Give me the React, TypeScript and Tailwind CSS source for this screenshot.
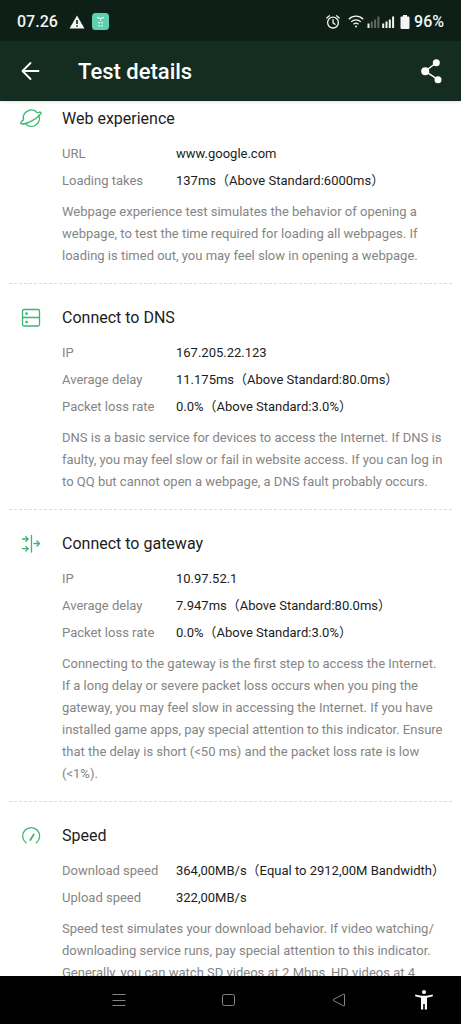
import type { ReactNode } from "react";

type Section = {
  title: string;
  icon: ReactNode;
  rows: [string, string][];
  text: string;
};

const stroke = {
  fill: "none",
  stroke: "currentColor",
  strokeWidth: 1.3,
  strokeLinecap: "round",
  strokeLinejoin: "round",
} as const;

function PlanetIcon() {
  return (
    <svg viewBox="0 0 24 24" className="size-6" {...stroke}>
      <path d="M4.5 12.6A8 8 0 0 1 18.4 5.8" />
      <path d="M19.8 8.2A8 8 0 0 1 7.2 17.4" />
      <path d="M4.5 12.8C2.2 14.6 1.2 15.9 1.8 16.5c1.2 1.2 6.800-.4 11.500-2.900C18.600 10.600 22.600 6.800 22 5.500c-.3-.600-1.300-.500-2.600-.1" />
    </svg>
  );
}

function ServerIcon() {
  return (
    <svg viewBox="0 0 24 24" className="size-6" {...stroke}>
      <rect x="3.500" y="3.500" width="17" height="16.500" rx="1.500" />
      <path d="M3.500 11.500h17" />
      <circle cx="7.600" cy="7.600" r=".7" fill="currentColor" />
      <circle cx="7.600" cy="16" r=".7" fill="currentColor" />
    </svg>
  );
}

function GatewayIcon() {
  return (
    <svg viewBox="0 0 24 24" className="size-6" {...stroke}>
      <path d="M12.500 3.500v16.500" />
      <path d="M3.500 7h5.700M6.800 4.700 9.200 7 6.800 9.300M3.500 16.700h5.700M6.800 14.400l2.400 2.300-2.400 2.300M15 11.500h5.400M18 9l2.500 2.500L18 14" />
    </svg>
  );
}

function GaugeIcon() {
  return (
    <svg viewBox="0 0 24 24" className="size-6" {...stroke}>
      <path d="M7 18.800A8.500 8.500 0 1 1 17.300 18.800" />
      <path d="M11.300 16 14.700 10.500" strokeWidth="1.800" />
    </svg>
  );
}

const sections: Section[] = [
  {
    title: "Web experience",
    icon: <PlanetIcon />,
    rows: [
      ["URL", "www.google.com"],
      ["Loading takes", "137ms（Above Standard:6000ms）"],
    ],
    text: "Webpage experience test simulates the behavior of opening a webpage, to test the time required for loading all webpages. If loading is timed out, you may feel slow in opening a webpage.",
  },
  {
    title: "Connect to DNS",
    icon: <ServerIcon />,
    rows: [
      ["IP", "167.205.22.123"],
      ["Average delay", "11.175ms（Above Standard:80.0ms）"],
      ["Packet loss rate", "0.0%（Above Standard:3.0%）"],
    ],
    text: "DNS is a basic service for devices to access the Internet. If DNS is faulty, you may feel slow or fail in website access. If you can log in to QQ but cannot open a webpage, a DNS fault probably occurs.",
  },
  {
    title: "Connect to gateway",
    icon: <GatewayIcon />,
    rows: [
      ["IP", "10.97.52.1"],
      ["Average delay", "7.947ms（Above Standard:80.0ms）"],
      ["Packet loss rate", "0.0%（Above Standard:3.0%）"],
    ],
    text: "Connecting to the gateway is the first step to access the Internet. If a long delay or severe packet loss occurs when you ping the gateway, you may feel slow in accessing the Internet. If you have installed game apps, pay special attention to this indicator. Ensure that the delay is short (<50 ms) and the packet loss rate is low (<1%).",
  },
  {
    title: "Speed",
    icon: <GaugeIcon />,
    rows: [
      ["Download speed", "364,00MB/s（Equal to 2912,00M Bandwidth）"],
      ["Upload speed", "322,00MB/s"],
    ],
    text: "Speed test simulates your download behavior. If video watching/ downloading service runs, pay special attention to this indicator. Generally, you can watch SD videos at 2 Mbps, HD videos at 4",
  },
];

function StatusBar() {
  return (
    <div className="flex h-[41px] shrink-0 items-center justify-between bg-[#0d1f16] px-[17px] pt-0.5 text-[#f2f5f3]">
      <div className="flex items-center">
        <span className="text-base font-medium">07.26</span>
        <svg viewBox="0 0 16 14" className="ml-[11px] h-3.5 w-4">
          <path d="M8 .5 15.500 13.500H.5Z" fill="currentColor" />
          <path d="M7.200 5h1.600v4H7.200zM7.200 10.200h1.600v1.600H7.200z" fill="#0d1f16" />
        </svg>
        <svg viewBox="0 0 17 17" className="ml-[7px] size-[17px]">
          <rect width="17" height="17" rx="3.500" fill="#5fcfae" />
          <path d="M5.200 4.200c1.500 1.700 5 1.700 6.600 0" fill="none" stroke="#fff" strokeWidth="1.200" />
          <path
            d="M8 6.500h1v1.500H8zM6.200 9h1.600v1.500H6.200zM9.200 9h1.600v1.500H9.200zM6.200 12h1.600v1.500H6.200zM9.200 12h1.600v1.500H9.200z"
            fill="#d9f5ec"
          />
        </svg>
      </div>
      <div className="flex items-center">
        <svg viewBox="0 0 14 14" className="size-3.5" fill="none" stroke="currentColor" strokeWidth="1.300" strokeLinecap="round">
          <circle cx="7" cy="7.600" r="5.400" />
          <path d="M7 4.700v3.100l2 1.500M.8 3 3.400.8M13.200 3 10.600.8" />
        </svg>
        <svg viewBox="0 0 16 13" className="ml-2 h-[13px] w-4" fill="none" stroke="currentColor" strokeWidth="1.300">
          <path d="M.8 4.200c4-4 10.400-4 14.400 0M3.200 6.900c2.700-2.700 6.900-2.700 9.600 0M5.500 9.300c1.500-1.400 3.500-1.400 5 0" />
          <circle cx="8" cy="11.600" r="1" fill="currentColor" stroke="none" />
        </svg>
        <svg viewBox="0 0 28 12" className="ml-[3px] h-3 w-7" fill="currentColor">
          <path d="M.5 7.500h2V12h-2z" />
          <path d="M3.800 5.500h2V12h-2zM7.100 3.500h2V12h-2zM10.400.5h2V12h-2z" opacity=".35" />
          <path d="M15.200 7.500h2V12h-2zM18.500 5.500h2V12h-2zM21.800 3.500h2V12h-2zM25.100.5h2V12h-2z" />
        </svg>
        <svg viewBox="0 0 10 14" className="ml-[5px] h-3.5 w-2.5" fill="currentColor">
          <path d="M3 0h4v1.500h1.500q1 0 1 1V13q0 1-1 1h-7q-1 0-1-1V2.500q0-1 1-1H3z" />
        </svg>
        <span className="ml-1 text-base font-medium">96%</span>
      </div>
    </div>
  );
}

function AppBar() {
  return (
    <header className="z-10 flex h-[60px] shrink-0 items-center bg-[#142d20] px-[18px] text-white shadow">
      <button type="button" aria-label="Back" className="flex size-6 items-center justify-center">
        <svg viewBox="0 0 24 24" className="size-6" fill="none" stroke="currentColor" strokeWidth="1.800" strokeLinecap="round" strokeLinejoin="round">
          <path d="M20.500 12H4.500M12.500 4l-8 8 8 8" />
        </svg>
      </button>
      <h1 className="ml-9 flex-1 text-[22px] font-medium">Test details</h1>
      <button type="button" aria-label="Share" className="flex size-6 items-center justify-center">
        <svg viewBox="0 0 24 26" className="h-[26px] w-6 shrink-0" fill="currentColor">
          <path d="M17.300 4.700 6.200 13.200l12.800 8.500" fill="none" stroke="currentColor" strokeWidth="1.400" />
          <circle cx="17.300" cy="4.700" r="3.500" />
          <circle cx="6.200" cy="13.200" r="4" />
          <circle cx="19" cy="21.700" r="3.500" />
        </svg>
      </button>
    </header>
  );
}

function NavBar() {
  return (
    <nav className="flex h-12 shrink-0 items-center bg-black text-[#858585]">
      <div className="flex flex-1 items-center justify-between pl-28">
        <button type="button" aria-label="Recent apps">
          <svg viewBox="0 0 14 14" className="size-3.5" fill="none" stroke="currentColor">
            <path d="M.5 1.500h13M.5 7.500h13M.5 12.500h13" />
          </svg>
        </button>
        <button type="button" aria-label="Home">
          <svg viewBox="0 0 14 14" className="size-3.5" fill="none" stroke="currentColor">
            <rect x=".5" y="1.500" width="12" height="11" rx="2" />
          </svg>
        </button>
        <button type="button" aria-label="Back">
          <svg viewBox="0 0 14 14" className="size-3.5" fill="none" stroke="currentColor" strokeLinejoin="round">
            <path d="M12.500 1.600v10.800q0 .8-.8.500L1.300 7.500q-.6-.5 0-1L11.700 1.100q.8-.3.8.5Z" />
          </svg>
        </button>
      </div>
      <button type="button" aria-label="Accessibility" className="mr-7 ml-[69px] text-white">
        <svg viewBox="0 0 18 20" className="h-5 w-[18px]" fill="currentColor">
          <circle cx="9" cy="2" r="2" />
          <path d="M.3 4.600 6 5.700h6l5.700-1.100.2 1.700L12 7.700v11.800h-2.200V14H8.200v5.500H6V7.700L.1 6.300z" />
        </svg>
      </button>
    </nav>
  );
}

export default function App() {
  return (
    <div className="flex h-screen flex-col bg-white font-[Roboto,'Noto_Sans_CJK_SC',sans-serif]">
      <StatusBar />
      <AppBar />
      <main className="min-h-0 flex-1 overflow-y-auto px-[9px] pt-1.5 [scrollbar-width:none]">
        {sections.map((s) => (
          <section
            key={s.title}
            className="flex border-t border-dashed border-[#dcdcdc] pt-[22px] pr-2 pb-4 pl-2.5 first:border-t-0 first:pt-0"
          >
            <span className="mr-[19px] shrink-0 text-[#35b870]">{s.icon}</span>
            <div className="min-w-0 flex-1">
              <h2 className="text-base leading-6 text-[#1c1c1c]">{s.title}</h2>
              <dl className="mt-[9px] text-[13px] leading-[27px]">
                {s.rows.map(([label, value]) => (
                  <div key={label} className="flex">
                    <dt className="w-[114px] shrink-0 text-[#858585]">{label}</dt>
                    <dd className="whitespace-nowrap text-[#1c1c1c]">{value}</dd>
                  </div>
                ))}
              </dl>
              <p className="mt-[7px] text-[13px] leading-[22px] text-[#858585]">{s.text}</p>
            </div>
          </section>
        ))}
      </main>
      <NavBar />
    </div>
  );
}
